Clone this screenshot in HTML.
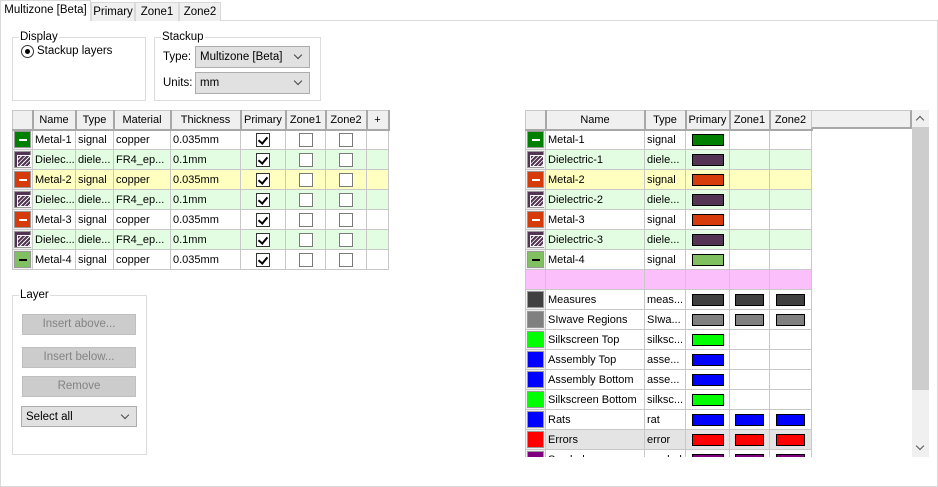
<!DOCTYPE html>
<html><head><meta charset="utf-8"><style>
*{box-sizing:border-box}
body{margin:0;width:938px;height:487px;background:#fff;font-family:"Liberation Sans",sans-serif;font-size:11.5px;color:#000;position:relative;overflow:hidden}
.a{position:absolute}
.tab{position:absolute;top:2px;height:19px;border:1px solid #d9d9d9;border-bottom:none;background:#f0f0f0;padding-top:3px;text-align:center;font-size:11.5px;white-space:nowrap;overflow:hidden}
.panel{position:absolute;left:0;top:20px;width:938px;height:467px;border:1px solid #d9d9d9}
fieldset{position:absolute;border:1px solid #dcdcdc;margin:0;padding:0}
legend{font-size:11.5px;padding:0 1px;margin-left:6px}
.combo{position:absolute;height:22px;background:#e1e1e1;border:1px solid #adadad;padding:4px 4px;font-size:11.5px}
.combo:after{content:"";position:absolute;right:8px;top:5px;width:5px;height:5px;border-right:1px solid #444;border-bottom:1px solid #444;transform:rotate(45deg)}
.btn{position:absolute;left:22px;width:114px;height:21px;background:#cccccc;border:1px solid #bfbfbf;color:#838383;text-align:center;line-height:19px}
table{border-collapse:collapse;table-layout:fixed;position:absolute}
td{border:1px solid #c8c8c8;height:20px;padding:0 0 0 2px;white-space:nowrap;overflow:hidden;font-size:11px}
th{height:19px;font-weight:normal;background:#f0f0f0;border:1px solid #c8c8c8;border-right:2px solid #a8a8a8;border-bottom:2px solid #a8a8a8;padding:0;font-size:11px;white-space:nowrap;overflow:hidden}
td.ic{padding:0;background:#f0f0f0}
.sw{width:17px;height:17px;margin:0 0 0 1px;position:relative;border:1px solid #999}
.sw.m:after{content:"";position:absolute;left:4px;top:7px;width:8px;height:2px;background:#fff}
.sw.k:after{content:"";position:absolute;left:4px;top:7px;width:8px;height:2px;background:#000}
.sw.d{background:#543454}
.sw.d:after{content:"";position:absolute;left:2px;top:3px;width:12px;height:10px;border:1px solid #fff;background:repeating-linear-gradient(135deg,#543454 0 2px,#fff 2px 3px)}
.g{background:#e3fde3}.y{background:#ffffc0}.p{background:#fbc0fb}.e{background:#e4e4e4}
.cb{display:block;margin:0 auto;width:14px;height:14px;border:1px solid #7a7a7a;background:#fff;position:relative}
.cb.on{border-color:#333}
.cb.on:after{content:"";position:absolute;left:3px;top:1px;width:4px;height:7px;border-right:2px solid #000;border-bottom:2px solid #000;transform:rotate(40deg)}
.c{text-align:center;padding:0}
.r{display:block;margin:0 auto;height:12px;border:1px solid #000}
</style></head><body>
<div class="panel"></div>
<div class="tab" style="left:0;top:0;width:91px;height:21px;background:#fff;z-index:2;padding-top:3px">Multizone [Beta]</div>
<div class="tab" style="left:91px;width:44px">Primary</div>
<div class="tab" style="left:135px;width:44px">Zone1</div>
<div class="tab" style="left:179px;width:42px">Zone2</div>

<fieldset style="left:12px;top:31px;width:134px;height:70px"><legend>Display</legend></fieldset>
<div class="a" style="left:21px;top:45px;width:13px;height:13px;border:1px solid #333;border-radius:50%"><div style="position:absolute;left:3px;top:3px;width:5px;height:5px;border-radius:50%;background:#000"></div></div>
<div class="a" style="left:37px;top:45px">Stackup layers</div>

<fieldset style="left:154px;top:31px;width:167px;height:70px"><legend>Stackup</legend></fieldset>
<div class="a" style="left:163px;top:51px">Type:</div>
<div class="combo" style="left:195px;top:46px;width:115px">Multizone [Beta]</div>
<div class="a" style="left:163px;top:77px">Units:</div>
<div class="combo" style="left:195px;top:72px;width:115px">mm</div>

<table style="left:12px;top:110px;width:376px">
<colgroup><col style="width:20px"><col style="width:43px"><col style="width:38px"><col style="width:57px"><col style="width:70px"><col style="width:45px"><col style="width:40px"><col style="width:41px"><col style="width:22px"></colgroup>
<tr><th></th><th>Name</th><th>Type</th><th>Material</th><th>Thickness</th><th>Primary</th><th>Zone1</th><th>Zone2</th><th>+</th></tr>
<tr><td class="ic"><div class="sw m" style="background:#008000"></div></td><td>Metal-1</td><td>signal</td><td>copper</td><td>0.035mm</td><td class="c"><i class="cb on"></i></td><td class="c"><i class="cb"></i></td><td class="c"><i class="cb"></i></td><td></td></tr>
<tr class="g"><td class="ic"><div class="sw d"></div></td><td>Dielec...</td><td>diele...</td><td>FR4_ep...</td><td>0.1mm</td><td class="c"><i class="cb on"></i></td><td class="c"><i class="cb"></i></td><td class="c"><i class="cb"></i></td><td></td></tr>
<tr class="y"><td class="ic"><div class="sw m" style="background:#d83b0b"></div></td><td>Metal-2</td><td>signal</td><td>copper</td><td>0.035mm</td><td class="c"><i class="cb on"></i></td><td class="c"><i class="cb"></i></td><td class="c"><i class="cb"></i></td><td></td></tr>
<tr class="g"><td class="ic"><div class="sw d"></div></td><td>Dielec...</td><td>diele...</td><td>FR4_ep...</td><td>0.1mm</td><td class="c"><i class="cb on"></i></td><td class="c"><i class="cb"></i></td><td class="c"><i class="cb"></i></td><td></td></tr>
<tr><td class="ic"><div class="sw m" style="background:#d83b0b"></div></td><td>Metal-3</td><td>signal</td><td>copper</td><td>0.035mm</td><td class="c"><i class="cb on"></i></td><td class="c"><i class="cb"></i></td><td class="c"><i class="cb"></i></td><td></td></tr>
<tr class="g"><td class="ic"><div class="sw d"></div></td><td>Dielec...</td><td>diele...</td><td>FR4_ep...</td><td>0.1mm</td><td class="c"><i class="cb on"></i></td><td class="c"><i class="cb"></i></td><td class="c"><i class="cb"></i></td><td></td></tr>
<tr><td class="ic"><div class="sw k" style="background:#80c060"></div></td><td>Metal-4</td><td>signal</td><td>copper</td><td>0.035mm</td><td class="c"><i class="cb on"></i></td><td class="c"><i class="cb"></i></td><td class="c"><i class="cb"></i></td><td></td></tr>
</table>

<fieldset style="left:12px;top:289px;width:135px;height:166px"><legend>Layer</legend></fieldset>
<div class="btn" style="top:314px">Insert above...</div>
<div class="btn" style="top:347px">Insert below...</div>
<div class="btn" style="top:376px">Remove</div>
<div class="combo" style="left:21px;top:406px;width:116px;height:21px;background:#e1e1e1;color:#000">Select all</div>

<div class="a" style="left:525px;top:110px;width:387px;height:347px;overflow:hidden">
<table style="left:0;top:0;width:286px">
<colgroup><col style="width:20px"><col style="width:99px"><col style="width:41px"><col style="width:44px"><col style="width:40px"><col style="width:42px"></colgroup>
<tr><th></th><th>Name</th><th>Type</th><th>Primary</th><th>Zone1</th><th>Zone2</th></tr>
<tr><td class="ic"><div class="sw m" style="background:#008000"></div></td><td>Metal-1</td><td>signal</td><td class="c"><i class="r" style="width:32px;background:#008000"></i></td><td></td><td></td></tr>
<tr class="g"><td class="ic"><div class="sw d"></div></td><td>Dielectric-1</td><td>diele...</td><td class="c"><i class="r" style="width:32px;background:#543454"></i></td><td></td><td></td></tr>
<tr class="y"><td class="ic"><div class="sw m" style="background:#d83b0b"></div></td><td>Metal-2</td><td>signal</td><td class="c"><i class="r" style="width:32px;background:#d83b0b"></i></td><td></td><td></td></tr>
<tr class="g"><td class="ic"><div class="sw d"></div></td><td>Dielectric-2</td><td>diele...</td><td class="c"><i class="r" style="width:32px;background:#543454"></i></td><td></td><td></td></tr>
<tr><td class="ic"><div class="sw m" style="background:#d83b0b"></div></td><td>Metal-3</td><td>signal</td><td class="c"><i class="r" style="width:32px;background:#d83b0b"></i></td><td></td><td></td></tr>
<tr class="g"><td class="ic"><div class="sw d"></div></td><td>Dielectric-3</td><td>diele...</td><td class="c"><i class="r" style="width:32px;background:#543454"></i></td><td></td><td></td></tr>
<tr><td class="ic"><div class="sw k" style="background:#80c060"></div></td><td>Metal-4</td><td>signal</td><td class="c"><i class="r" style="width:32px;background:#80c060"></i></td><td></td><td></td></tr>
<tr class="p"><td class="ic" style="background:#fbc0fb"></td><td></td><td></td><td></td><td></td><td></td></tr>
<tr><td class="ic"><div class="sw" style="background:#404040"></div></td><td>Measures</td><td>meas...</td><td class="c"><i class="r" style="width:32px;background:#404040"></i></td><td class="c"><i class="r" style="width:29px;background:#404040"></i></td><td class="c"><i class="r" style="width:29px;background:#404040"></i></td></tr>
<tr><td class="ic"><div class="sw" style="background:#808080"></div></td><td>SIwave Regions</td><td>SIwa...</td><td class="c"><i class="r" style="width:32px;background:#808080"></i></td><td class="c"><i class="r" style="width:29px;background:#808080"></i></td><td class="c"><i class="r" style="width:29px;background:#808080"></i></td></tr>
<tr><td class="ic"><div class="sw" style="background:#00ff00"></div></td><td>Silkscreen Top</td><td>silksc...</td><td class="c"><i class="r" style="width:32px;background:#00ff00"></i></td><td></td><td></td></tr>
<tr><td class="ic"><div class="sw" style="background:#0000ff"></div></td><td>Assembly Top</td><td>asse...</td><td class="c"><i class="r" style="width:32px;background:#0000ff"></i></td><td></td><td></td></tr>
<tr><td class="ic"><div class="sw" style="background:#0000ff"></div></td><td>Assembly Bottom</td><td>asse...</td><td class="c"><i class="r" style="width:32px;background:#0000ff"></i></td><td></td><td></td></tr>
<tr><td class="ic"><div class="sw" style="background:#00ff00"></div></td><td>Silkscreen Bottom</td><td>silksc...</td><td class="c"><i class="r" style="width:32px;background:#00ff00"></i></td><td></td><td></td></tr>
<tr><td class="ic"><div class="sw" style="background:#0000ff"></div></td><td>Rats</td><td>rat</td><td class="c"><i class="r" style="width:32px;background:#0000ff"></i></td><td class="c"><i class="r" style="width:29px;background:#0000ff"></i></td><td class="c"><i class="r" style="width:29px;background:#0000ff"></i></td></tr>
<tr class="e"><td class="ic"><div class="sw" style="background:#ff0000"></div></td><td>Errors</td><td>error</td><td class="c"><i class="r" style="width:32px;background:#ff0000"></i></td><td class="c"><i class="r" style="width:29px;background:#ff0000"></i></td><td class="c"><i class="r" style="width:29px;background:#ff0000"></i></td></tr>
<tr><td class="ic"><div class="sw" style="background:#800080"></div></td><td>Symbols</td><td>symbol</td><td class="c"><i class="r" style="width:32px;background:#800080"></i></td><td class="c"><i class="r" style="width:29px;background:#800080"></i></td><td class="c"><i class="r" style="width:29px;background:#800080"></i></td></tr>
</table>
<div class="a" style="left:286px;top:0;width:101px;height:19px;background:#f0f0f0;border:1px solid #c8c8c8;border-right:2px solid #a8a8a8;border-bottom:2px solid #a8a8a8"></div>
</div>
<div class="a" style="left:912px;top:110px;width:17px;height:347px;background:#f0f0f0"></div>
<div class="a" style="left:912px;top:127px;width:17px;height:263px;background:#cdcdcd"></div>
<div class="a" style="left:917px;top:117px;width:6px;height:6px;border-left:1.5px solid #555;border-top:1.5px solid #555;transform:rotate(45deg)"></div>
<div class="a" style="left:917px;top:443px;width:6px;height:6px;border-right:1.5px solid #555;border-bottom:1.5px solid #555;transform:rotate(45deg)"></div>
</body></html>
